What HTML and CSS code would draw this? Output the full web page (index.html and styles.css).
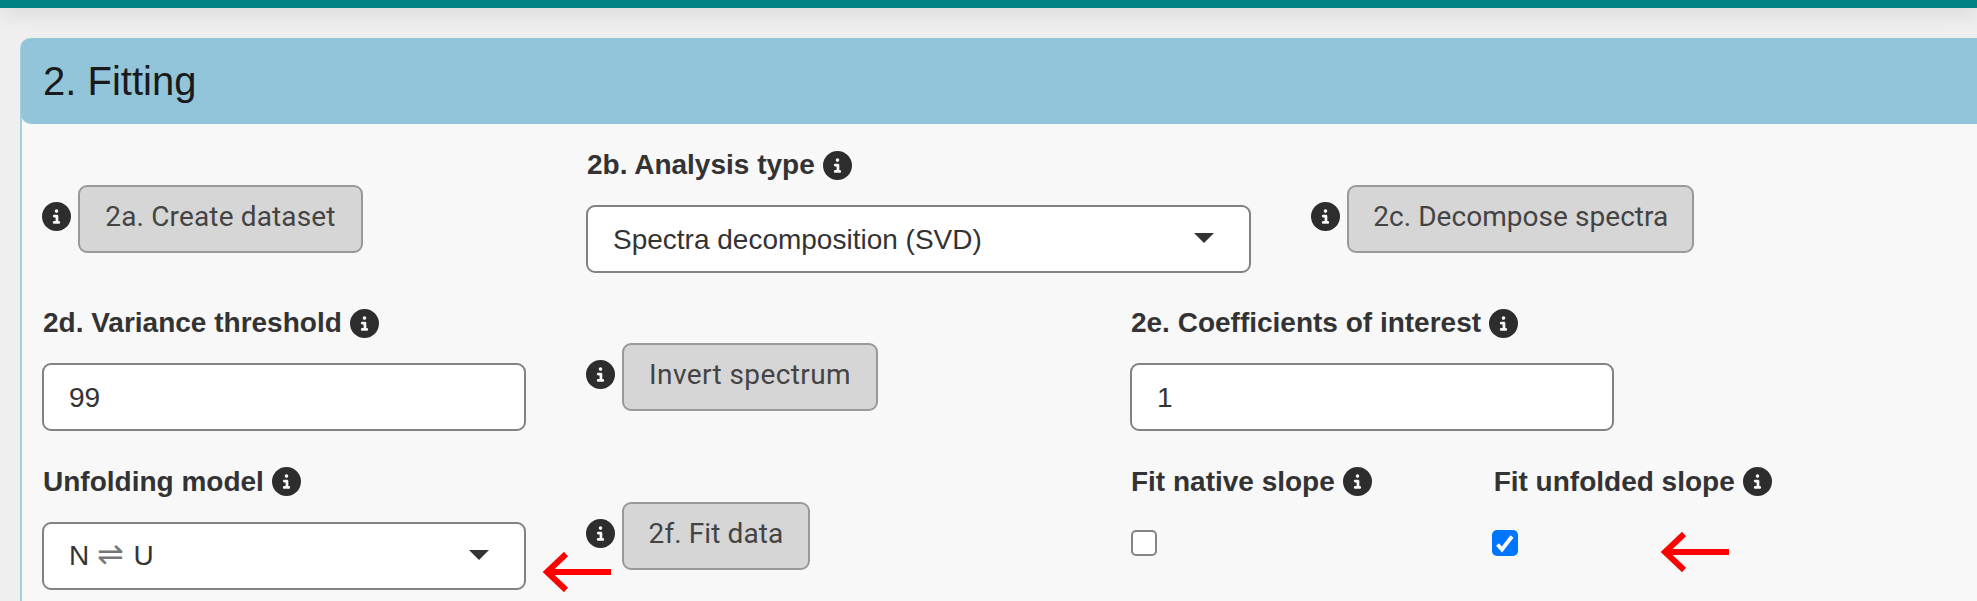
FILE: index.html
```html
<!DOCTYPE html>
<html lang="en">
<head>
<meta charset="utf-8">
<title>Fitting</title>
<link rel="stylesheet" href="styles.css">
</head>
<body>
<svg width="0" height="0" class="defs">
  <symbol id="info" viewBox="0 0 512 512"><path fill="currentColor" d="M256 0a256 256 0 1 0 0 512 256 256 0 1 0 0-512zM216 336h24v-64h-24c-13.300 0-24-10.700-24-24s10.700-24 24-24h48c13.300 0 24 10.700 24 24v88h8c13.300 0 24 10.700 24 24s-10.700 24-24 24h-80c-13.300 0-24-10.700-24-24s10.700-24 24-24zm40-208a32 32 0 1 1 0 64 32 32 0 1 1 0-64z"/></symbol>
  <symbol id="arrow" viewBox="0 0 72 40"><path fill="none" stroke="#f00" stroke-width="6" d="M70 20H6M25 2 6 20l19 18"/></symbol>
</svg>
<div class="topbar"></div>
<section class="card">
  <h2 class="card-title">2. Fitting</h2>
  <div class="card-body">
    <div class="cell action span3"><svg class="info"><use href="#info"/></svg><button class="btn w-create">2a. Create dataset</button></div>
    <div class="cell span4">
      <div class="label">2b. Analysis type <svg class="info"><use href="#info"/></svg></div>
      <div class="field select">Spectra decomposition (SVD)</div>
    </div>
    <div class="cell action span5"><svg class="info"><use href="#info"/></svg><button class="btn w-decompose">2c. Decompose spectra</button></div>

    <div class="cell span3">
      <div class="label">2d. Variance threshold <svg class="info"><use href="#info"/></svg></div>
      <div class="field">99</div>
    </div>
    <div class="cell action span3"><svg class="info"><use href="#info"/></svg><button class="btn w-invert">Invert spectrum</button></div>
    <div class="cell span3">
      <div class="label">2e. Coefficients of interest <svg class="info"><use href="#info"/></svg></div>
      <div class="field">1</div>
    </div>
    <div class="cell span3"></div>

    <div class="cell span3">
      <div class="label">Unfolding model <svg class="info"><use href="#info"/></svg></div>
      <div class="field select"><span>N <span class="harpoon">⇌</span> U</span></div>
      <svg class="arrow arrow-model"><use href="#arrow"/></svg>
    </div>
    <div class="cell action span3"><svg class="info"><use href="#info"/></svg><button class="btn w-fit">2f. Fit data</button></div>
    <div class="cell span2">
      <div class="label">Fit native slope <svg class="info"><use href="#info"/></svg></div>
      <span class="check"></span>
    </div>
    <div class="cell span4">
      <div class="label">Fit unfolded slope <svg class="info"><use href="#info"/></svg></div>
      <span class="check checked"><svg viewBox="0 0 26 26"><path d="M5.500 14.500l4.500 5L20 6.500" fill="none" stroke="#fff" stroke-width="3.800"/></svg></span>
      <svg class="arrow arrow-slope"><use href="#arrow"/></svg>
    </div>
  </div>
</section>
</body>
</html>
```
FILE: styles.css
```css
* { box-sizing: border-box; }
body {
  margin: 0;
  height: 601px;
  overflow: hidden;
  background: #efefef;
  color: #333;
  font: 28px/40px "Liberation Sans", Arial, sans-serif;
}
.defs { position: absolute; }
.topbar {
  height: 8px;
  background: #007f84;
  box-shadow: 0 2px 22px rgba(0, 0, 0, .2);
}
.card {
  width: 2162px;
  height: 700px;
  margin: 30px 0 0 20px;
  border: 2px solid #a5d0df;
  border-top: 0;
  border-radius: 10px;
  background: #f8f8f8;
}
.card-title {
  height: 86px;
  margin: 0 0 0 -1px;
  padding: 0 22px;
  border-radius: 10px;
  background: #92c5da;
  color: #1a1a1a;
  font-size: 40px;
  font-weight: 400;
  line-height: 86px;
}
.card-body {
  display: grid;
  grid-template-columns: repeat(12, 121.33px);
  grid-auto-rows: 158.3px;
  column-gap: 60px;
  padding: 21px 20px 0;
}
.cell { position: relative; white-space: nowrap; }
.span2 { grid-column: span 2; }
.span3 { grid-column: span 3; }
.span4 { grid-column: span 4; }
.span5 { grid-column: span 5; }
.action {
  display: flex;
  align-items: flex-start;
  gap: 7px;
  padding-top: 40px;
}
.info { width: 29px; height: 29px; color: #2d2d2d; flex: none; }
.action .info { margin-top: 17px; }
.label { display: flex; align-items: center; gap: 8px; height: 40px; padding-left: 1px; font-weight: 700; }
.btn {
  height: 68px;
  padding: 0 0 4px;
  border: 2px solid #999;
  border-radius: 9px;
  background: #d6d6d6;
  color: #444;
  font: 28px/40px Roboto, sans-serif;
}
.w-create { width: 285px; letter-spacing: .15px; }
.w-decompose { width: 347px; letter-spacing: .05px; }
.w-invert { width: 256px; letter-spacing: .4px; }
.w-fit { width: 188px; letter-spacing: .1px; }
.field {
  display: flex;
  align-items: center;
  justify-content: space-between;
  height: 68px;
  margin-top: 20px;
  padding: 1px 35px 0 25px;
  border: 2px solid #828282;
  border-radius: 9px;
  background: #fff;
}
.select::after {
  content: "";
  margin-top: -3px;
  border: 10px solid transparent;
  border-top-color: #333;
  border-bottom: 0;
}
.harpoon { margin-right: 2px; font: 32px/1 "DejaVu Sans", sans-serif; color: #777; }
.check {
  display: block;
  width: 26px;
  height: 26px;
  margin: 28px 0 0 1px;
  border: 2px solid #858585;
  border-radius: 5px;
  background: #fff;
}
.checked { margin-left: -1px; border: 0; background: #0075ff; }
.checked svg { display: block; }
.arrow { position: absolute; width: 72px; height: 40px; }
.arrow-model { left: 499px; top: 90px; }
.arrow-slope { left: 166px; top: 70px; }
```
